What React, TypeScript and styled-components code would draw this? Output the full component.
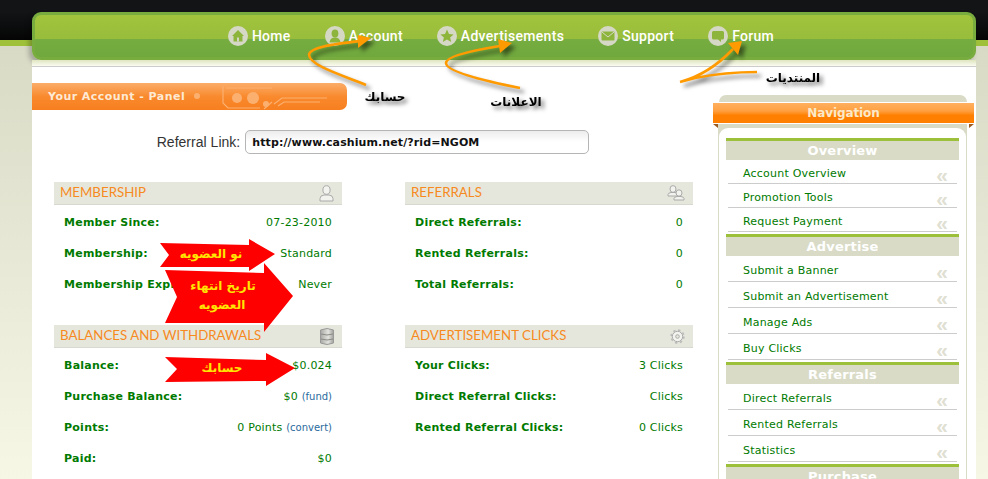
import React from 'react';
import styled, {createGlobalStyle} from 'styled-components';

const GlobalStyle = createGlobalStyle`
    html, body {
        margin: 0;
        padding: 0;
        height: 479px;
        overflow: hidden;
    }
    body {
        background: linear-gradient(#d8dac6, #fafae8) 0 46px no-repeat, #d8dac6;
        font-family: "DejaVu Sans", Verdana, sans-serif;
        font-size: 11px;
    }
`

const Page = styled.div`
    position: relative;
    height: 479px;
    overflow: hidden;
    background: linear-gradient(#131416 0, #131416 12px, #050505 40px, #9fc13a 40px, #9fc13a 46px, transparent 46px);
`
const Shell = styled.div`
    width: 944px;
    margin-left: 32px;
    padding-top: 12px;
`
const TopNav = styled.nav`
    height: 42px;
    border: 3px solid #79ac3f;
    border-radius: 9px;
    background: linear-gradient(#a2c43c 0, #98bd3c 24px, #76ad40 24px, #70a83e 100%);
    box-shadow: -3px 3px 5px rgba(0, 0, 0, .25);
    display: flex;
    justify-content: center;
    align-items: center;
    gap: 34px;
    padding-right: 6px;
    box-sizing: content-box;
    width: 932px;
`
const NavItem = styled.a`
    display: flex;
    align-items: center;
    gap: 4px;
    color: #fff;
    font-family: "Roboto", "Liberation Sans", sans-serif;
    font-size: 14px;
    font-weight: 500;
    letter-spacing: .3px;
`
const NavFoot = styled.div`
    position: relative;
    height: 6px;
    background: linear-gradient(#dfe5c0, #fbfbf0);
    border-bottom: 1px solid #ccc;
`
const Content = styled.div`
    position: relative;
    display: flex;
    background: #fff;
    height: 412px;
`
const Main = styled.main`
    width: 681px;
    padding-top: 16px;
`
const PanelTitle = styled.div`
    position: relative;
    width: 315px;
    height: 27px;
    box-sizing: border-box;
    padding-left: 16px;
    line-height: 28px;
    color: #fde9d4;
    font-weight: bold;
    letter-spacing: .45px;
    font-size: 11px;
    border-radius: 0 7px 7px 0;
    overflow: hidden;
    background: linear-gradient(#fbad6a, #f98a2e 50%, #f77f1f);
    svg {
        position: absolute;
        left: 160px;
        top: 0;
    }
`
const ReferralRow = styled.div`
    display: flex;
    justify-content: center;
    align-items: center;
    gap: 5px;
    margin-top: 20px;
    font-family: "Liberation Sans", Arial, sans-serif;
    font-size: 14px;
    color: #333;
    letter-spacing: .02px;
    padding-left: 1px;
`
const ReferralInput = styled.input`
    width: 344px;
    height: 24px;
    box-sizing: border-box;
    padding: 0 6px;
    border: 1px solid #b5b5b5;
    border-radius: 5px;
    outline: none;
    background: linear-gradient(#ececec, #fff 50%);
    font-family: "DejaVu Sans", Verdana, sans-serif;
    font-size: 11px;
    font-weight: bold;
    letter-spacing: .1px;
    color: #111;
`
const Columns = styled.div`
    display: grid;
    grid-template-columns: 288px 288px;
    column-gap: 63px;
    padding-left: 22px;
    margin-top: 28px;
`
const Section = styled.section`
    height: 143px;
`
const SectionHead = styled.h3`
    display: flex;
    justify-content: space-between;
    align-items: center;
    height: 23px;
    box-sizing: border-box;
    margin: 0 0 2px;
    padding: 0 8px 0 6px;
    background: #e6e7dc;
    border-bottom: 1px solid #d8d8d0;
    font-family: "Lato", "Open Sans", sans-serif;
    font-size: 13.3px;
    font-weight: 400;
    color: #f68a1f;
    span {
        margin-top: -3px;
    }
`
const Row = styled.div`
    display: flex;
    justify-content: space-between;
    align-items: center;
    height: 31px;
    padding: 0 10px;
    color: #007a00;
    letter-spacing: .2px;
`
const RowLabel = styled.span`
    font-weight: bold;
    letter-spacing: .25px;
`
const RowLink = styled.a`
    color: #2a6a9e;
    font-size: 10px;
    letter-spacing: 0;
`
const Sidebar = styled.aside`
    width: 261px;
    padding-top: 28px;
`
const SideCap = styled.div`
    height: 7px;
    margin: 0 7px 0 6px;
    background: #d9dbc7;
    border-radius: 9px 9px 0 0;
`
const Ribbon = styled.div`
    position: relative;
    height: 22px;
    box-sizing: border-box;
    border-top: 1px solid #fff;
    border-bottom: 1px solid #fff;
    text-align: center;
    line-height: 20px;
    color: #fbe9c8;
    font-size: 12px;
    font-weight: bold;
    letter-spacing: -.1px;
    background: linear-gradient(#ffb060, #ffa040 40%, #ff8000 62%);
    &::before, &::after {
        content: '';
        position: absolute;
        top: 21px;
        border-top: 4px solid #9a5a20;
    }
    &::before {
        left: 0;
        border-left: 5px solid transparent;
    }
    &::after {
        right: 0;
        border-right: 5px solid transparent;
    }
`
const SideFrame = styled.div`
    margin: 0 7px 0 5px;
    padding-top: 4px;
    background: #d9dbc7;
`
const SideCard = styled.div`
    background: #fff;
    margin: 0 1px;
    padding: 10px 7px 0;
    border-radius: 9px 9px 0 0;
`
const GroupHead = styled.h4`
    height: 22px;
    box-sizing: border-box;
    margin: 0;
    border-top: 3px solid #9dc03a;
    background: #d9dbc7;
    text-align: center;
    line-height: 19px;
    color: #fff;
    font-size: 13px;
    font-weight: bold;
    letter-spacing: .2px;
`
const SideList = styled.ul`
    list-style: none;
    margin: 0 0 2px;
    padding: 0;
`
const SideLink = styled.li<{$tall?: boolean}>`
    display: flex;
    justify-content: space-between;
    align-items: center;
    height: ${p => p.$tall ? 26 : 24}px;
    box-sizing: border-box;
    margin: 0 2px;
    padding: 4px 9px 0 15px;
    border-bottom: 1px solid #ccc;
    color: #007a00;
    letter-spacing: .22px;
`
const Chevrons = styled.span`
    font-family: "Liberation Sans", Arial, sans-serif;
    font-size: 21px;
    font-weight: bold;
    line-height: 1;
    letter-spacing: 0;
    color: #dfe0d2;
    margin-top: 1px;
`
const Overlay = styled.svg`
    position: absolute;
    left: 0;
    top: 0;
    pointer-events: none;
`
const Curves = styled.g`
    filter: drop-shadow(4px 4px 2px rgba(0, 0, 0, .5));
`
const Caption = styled.text`
    font-family: "DejaVu Sans", sans-serif;
    font-size: 12px;
    font-weight: bold;
    fill: #000;
    text-anchor: middle;
    filter: drop-shadow(3px 3px 2px rgba(0, 0, 0, .6));
`
const ArrowText = styled.text`
    font-family: "DejaVu Sans", sans-serif;
    font-size: 12px;
    font-weight: bold;
    fill: #ffe600;
    text-anchor: middle;
`

const HomeIcon = () => (
    <svg width="20" height="20" viewBox="0 0 20 20">
        <circle cx="10" cy="10" r="10" fill="#d6d8c6"/>
        <path d="M10 4 L16 10 H14.5 V15.5 H5.5 V10 H4 Z" fill="#8db53c"/>
        <rect x="9" y="11.5" width="2" height="4" fill="#d6d8c6"/>
    </svg>
)
const UserIcon = () => (
    <svg width="20" height="20" viewBox="0 0 20 20">
        <circle cx="10" cy="10" r="10" fill="#d6d8c6"/>
        <ellipse cx="10" cy="7.5" rx="3.4" ry="4" fill="#8db53c"/>
        <path d="M4.5 16.5 C5 12.5 7.5 11.5 10 11.5 C12.5 11.5 15 12.5 15.5 16.5 Z" fill="#8db53c"/>
    </svg>
)
const StarIcon = () => (
    <svg width="20" height="20" viewBox="0 0 20 20">
        <circle cx="10" cy="10" r="10" fill="#d6d8c6"/>
        <path d="M10 3.5 L12 8 L16.6 8.4 L13.1 11.5 L14.2 16 L10 13.6 L5.8 16 L6.9 11.5 L3.4 8.4 L8 8 Z" fill="#8db53c"/>
    </svg>
)
const MailIcon = () => (
    <svg width="20" height="20" viewBox="0 0 20 20">
        <circle cx="10" cy="10" r="10" fill="#d6d8c6"/>
        <rect x="3.5" y="5.5" width="13" height="9" rx="1" fill="#8db53c"/>
        <path d="M4 6 L10 11 L16 6" fill="none" stroke="#d6d8c6" strokeWidth="1"/>
    </svg>
)
const BubbleIcon = () => (
    <svg width="20" height="20" viewBox="0 0 20 20">
        <circle cx="10" cy="10" r="10" fill="#d6d8c6"/>
        <path d="M5.5 5 H14.5 Q16 5 16 6.5 V12 Q16 13.5 14.5 13.5 H13 V16 L10 13.5 H5.5 Q4 13.5 4 12 V6.5 Q4 5 5.5 5 Z" fill="#8db53c"/>
    </svg>
)
const PersonGlyph = () => (
    <svg width="15" height="17" viewBox="0 0 15 17">
        <ellipse cx="7.5" cy="5" rx="3.6" ry="4.3" fill="#f2f2ee" stroke="#aaa"/>
        <path d="M1 16 V13.5 Q1 10.5 5 10 H10 Q14 10.5 14 13.5 V16 Z" fill="#f2f2ee" stroke="#aaa"/>
    </svg>
)
const PeopleGlyph = () => (
    <svg width="18" height="16" viewBox="0 0 18 16">
        <ellipse cx="6" cy="4" rx="3" ry="3.4" fill="#f2f2ee" stroke="#aaa"/>
        <path d="M1 11 V9.5 Q1 8 4 7.5 H8 Q11 8 11 9.5 V11 Z" fill="#f2f2ee" stroke="#aaa"/>
        <ellipse cx="12" cy="8" rx="3" ry="3.2" fill="#f2f2ee" stroke="#aaa"/>
        <path d="M7 15 V13.5 Q7 12 10 11.5 H14 Q17 12 17 13.5 V15 Z" fill="#f2f2ee" stroke="#aaa"/>
    </svg>
)
const StackGlyph = () => (
    <svg width="14" height="17" viewBox="0 0 14 17">
        <defs>
            <linearGradient id="drum" x1="0" x2="1" y1="0" y2="0">
                <stop offset="0" stopColor="#a8a8a4"/>
                <stop offset=".6" stopColor="#e2e2de"/>
                <stop offset="1" stopColor="#a0a09c"/>
            </linearGradient>
        </defs>
        <path d="M.5 2 Q7 -1 13.5 2 V15 Q7 18 .5 15 Z" fill="url(#drum)" stroke="#999"/>
        <path d="M1 6 Q7 8 13 6 M1 11 Q7 13 13 11" fill="none" stroke="#8a8a86"/>
    </svg>
)
const GearGlyph = () => (
    <svg width="15" height="15" viewBox="0 0 15 15">
        <circle cx="7.5" cy="7.5" r="5.2" fill="#f2f2ee" stroke="#aaa" strokeWidth="1"/>
        <circle cx="7.5" cy="7.5" r="6.4" fill="none" stroke="#bbb" strokeWidth="1.6" strokeDasharray="2.4 2.6"/>
        <circle cx="7.5" cy="7.5" r="1.8" fill="#e6e7dc" stroke="#aaa"/>
    </svg>
)
const Circuit = () => (
    <svg width="145" height="27" viewBox="0 0 145 27" fill="none" stroke="#fbb070" strokeWidth="1.2">
        <circle cx="5" cy="13" r="3" fill="#fbb070" stroke="none"/>
        <circle cx="45" cy="15" r="5" fill="#fbb070" stroke="none"/>
        <circle cx="61" cy="15" r="6" fill="#fbb070" stroke="none"/>
        <path d="M31 3 V20 L36 25 H68 M34 5 H80 M82 21 L90 15 H135 M86 23 L92 19 H128 M72 26 L80 19"/>
        <circle cx="74" cy="21" r="3" fill="#fbb070" stroke="none"/>
    </svg>
)

const navItems = [
    {label: 'Home', icon: <HomeIcon/>},
    {label: 'Account', icon: <UserIcon/>},
    {label: 'Advertisements', icon: <StarIcon/>},
    {label: 'Support', icon: <MailIcon/>},
    {label: 'Forum', icon: <BubbleIcon/>},
]

type StatRow = {label: string, value: string, link?: string}

const StatSection: React.FC<{title: string, icon: JSX.Element, rows: StatRow[]}> = ({title, icon, rows}) => (
    <Section>
        <SectionHead><span>{title}</span>{icon}</SectionHead>
        {rows.map(r => (
            <Row key={r.label}>
                <RowLabel>{r.label}</RowLabel>
                <span>{r.value}{r.link && <> <RowLink>{r.link}</RowLink></>}</span>
            </Row>
        ))}
    </Section>
)

const sideGroups = [
    {title: 'Overview', tall: false, links: ['Account Overview', 'Promotion Tools', 'Request Payment']},
    {title: 'Advertise', tall: true, links: ['Submit a Banner', 'Submit an Advertisement', 'Manage Ads', 'Buy Clicks']},
    {title: 'Referrals', tall: true, links: ['Direct Referrals', 'Rented Referrals', 'Statistics']},
    {title: 'Purchase', tall: true, links: []},
]

export default function App() {
    return (
        <Page>
            <GlobalStyle/>
            <Shell>
                <TopNav>
                    {navItems.map(n => <NavItem key={n.label}>{n.icon}{n.label}</NavItem>)}
                </TopNav>
                <NavFoot/>
                <Content>
                    <Main>
                        <PanelTitle>Your Account - Panel<Circuit/></PanelTitle>
                        <ReferralRow>
                            Referral Link:
                            <ReferralInput readOnly value="http://www.cashium.net/?rid=NGOM"/>
                        </ReferralRow>
                        <Columns>
                            <StatSection title="MEMBERSHIP" icon={<PersonGlyph/>} rows={[
                                {label: 'Member Since:', value: '07-23-2010'},
                                {label: 'Membership:', value: 'Standard'},
                                {label: 'Membership Expires:', value: 'Never'},
                            ]}/>
                            <StatSection title="REFERRALS" icon={<PeopleGlyph/>} rows={[
                                {label: 'Direct Referrals:', value: '0'},
                                {label: 'Rented Referrals:', value: '0'},
                                {label: 'Total Referrals:', value: '0'},
                            ]}/>
                            <StatSection title="BALANCES AND WITHDRAWALS" icon={<StackGlyph/>} rows={[
                                {label: 'Balance:', value: '$0.024'},
                                {label: 'Purchase Balance:', value: '$0', link: '(fund)'},
                                {label: 'Points:', value: '0 Points', link: '(convert)'},
                                {label: 'Paid:', value: '$0'},
                            ]}/>
                            <StatSection title="ADVERTISEMENT CLICKS" icon={<GearGlyph/>} rows={[
                                {label: 'Your Clicks:', value: '3 Clicks'},
                                {label: 'Direct Referral Clicks:', value: 'Clicks'},
                                {label: 'Rented Referral Clicks:', value: '0 Clicks'},
                            ]}/>
                        </Columns>
                    </Main>
                    <Sidebar>
                        <SideCap/>
                        <Ribbon>Navigation</Ribbon>
                        <SideFrame>
                            <SideCard>
                                {sideGroups.map(g => (
                                    <React.Fragment key={g.title}>
                                        <GroupHead>{g.title}</GroupHead>
                                        <SideList>
                                            {g.links.map(l => (
                                                <SideLink key={l} $tall={g.tall}>{l}<Chevrons>«</Chevrons></SideLink>
                                            ))}
                                        </SideList>
                                    </React.Fragment>
                                ))}
                            </SideCard>
                        </SideFrame>
                    </Sidebar>
                </Content>
            </Shell>
            <Overlay width="988" height="479" viewBox="0 0 988 479">
                <Curves fill="none" stroke="#ff9a00" strokeWidth="2.6">
                    <path d="M366 85 C345 76 310 66 309 55 C309 47 335 44 360 41"/>
                    <path fill="#ff9a00" stroke="none" d="M358 35 L371 38 L358 48 Z"/>
                    <path d="M520 88 C490 82 446 72 446 63 C446 56 475 50 500 46"/>
                    <path fill="#ff9a00" stroke="none" d="M498 39 L512 43 L500 53 Z"/>
                    <path d="M757 72 C730 72 715 74 695 78 L680 82 C695 78 715 68 733 49"/>
                    <path fill="#ff9a00" stroke="none" d="M728 43 L742 41 L738 55 Z"/>
                </Curves>
                <Caption x="385" y="101">حسابك</Caption>
                <Caption x="516" y="106">الاعلانات</Caption>
                <Caption x="793" y="82">المنتديات</Caption>
                <path fill="#ff0000" d="M160 243 L249 245 L249 239 L275 254 L249 271 L249 267 L160 267 L169 255 Z"/>
                <path fill="#ff0000" d="M165 270 L264 273 L264 263 L293 296 L264 332 L264 323 L165 323 L177 297 Z"/>
                <path fill="#ff0000" d="M165 357 L266 360 L266 353 L295 368 L266 386 L266 381 L165 382 L177 369 Z"/>
                <ArrowText x="211" y="258">نو العضويه</ArrowText>
                <ArrowText x="223" y="290">تاريخ انتهاء</ArrowText>
                <ArrowText x="222" y="309">العضويه</ArrowText>
                <ArrowText x="222" y="372">حسابك</ArrowText>
            </Overlay>
        </Page>
    );
}
